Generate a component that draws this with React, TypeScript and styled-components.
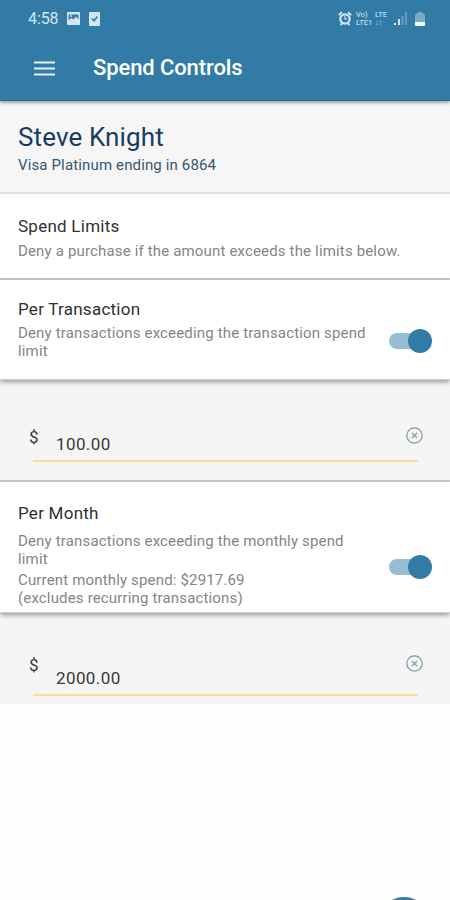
import React from "react";
import styled, { createGlobalStyle } from "styled-components";

const Global = createGlobalStyle`
  * { box-sizing: border-box; }
  body { margin: 0; background: #fff; font-family: Roboto, "Liberation Sans", sans-serif; }
`;

const Screen = styled.div`
  position: relative;
  width: 450px;
  height: 900px;
  overflow: hidden;
  background: #fefefe;
  display: flex;
  flex-direction: column;
`;

const Header = styled.header`
  flex: none;
  height: 101px;
  background: #337ba7;
  border-bottom: 1px solid #2e6d93;
  box-shadow: 0 1px 4px rgba(0, 0, 0, 0.5);
  z-index: 1;
`;

const StatusBar = styled.div`
  height: 37px;
  padding: 0 25px 0 28px;
  display: flex;
  align-items: center;
  justify-content: space-between;
  color: #d3e5f0;
`;

const StatusGroup = styled.div<{ $gap: number }>`
  display: flex;
  align-items: center;
  gap: ${(p) => p.$gap}px;
`;

const Clock = styled.span`
  font-size: 16px;
  line-height: 20px;
  letter-spacing: -0.1px;
  padding-top: 1px;
`;

const Network = styled.div`
  display: grid;
  grid-template-columns: 18px 15px;
  gap: 0 1px;
  font-size: 7.5px;
  line-height: 7.5px;
  font-weight: 500;
  white-space: nowrap;
  opacity: 0.85;
`;

const BatterySlot = styled.div`
  display: flex;
  margin-left: 4px;
`;

const TitleBar = styled.div`
  height: 63px;
  padding: 0 0 2px 34px;
  display: flex;
  align-items: center;
  gap: 38px;
`;

const Title = styled.h1`
  margin: 0;
  color: #fff;
  font-size: 22px;
  line-height: 26px;
  font-weight: 500;
  letter-spacing: -0.1px;
`;

const Account = styled.section`
  flex: none;
  height: 93px;
  padding: 21px 18px 0;
  background: #f6f6f6;
  border-bottom: 2px solid #dfdfdf;
`;

const Name = styled.div`
  color: #173c63;
  font-size: 26px;
  line-height: 30px;
  letter-spacing: 0.12px;
`;

const Card = styled.div`
  margin-top: 4px;
  color: #355770;
  font-size: 15px;
  line-height: 18px;
  letter-spacing: 0.14px;
`;

const Section = styled.section<{ $height: number; $top: number; $line?: boolean }>`
  flex: none;
  position: relative;
  height: ${(p) => p.$height}px;
  padding: ${(p) => p.$top}px 18px 0;
  background: #fff;
  border-bottom: ${(p) => (p.$line ? "2px solid #c9c9c9" : "1px solid #cfcfcf")};
  box-shadow: ${(p) => (p.$line ? "none" : "0 2px 5px rgba(0, 0, 0, 0.38)")};
  z-index: 1;
  display: flex;
  justify-content: space-between;
`;

const Heading = styled.h2<{ $gap: number }>`
  margin: 0 0 ${(p) => p.$gap}px;
  color: #303030;
  font-size: 17px;
  line-height: 20px;
  font-weight: 400;
  letter-spacing: 0.25px;
`;

const Text = styled.p`
  margin: 0 0 3px;
  color: #858585;
  font-size: 15px;
  line-height: 18px;
  letter-spacing: 0.16px;
  white-space: nowrap;
`;

const Toggle = styled.button<{ $top: number }>`
  flex: none;
  width: 43px;
  height: 24px;
  margin-top: ${(p) => p.$top}px;
  padding: 0;
  border: 0;
  background: none;
  display: flex;
  align-items: center;
  justify-content: flex-end;
`;

const Track = styled.span`
  width: 30px;
  height: 16px;
  margin-right: -11px;
  border-radius: 8px;
  background: #98bdd3;
`;

const Knob = styled.span`
  width: 24px;
  height: 24px;
  border-radius: 50%;
  background: #337ba7;
`;

const Field = styled.div<{ $height: number; $top: number; $line?: boolean }>`
  flex: none;
  height: ${(p) => p.$height}px;
  padding: ${(p) => p.$top}px 27px 0 29px;
  background: #f5f5f5;
  border-bottom: ${(p) => (p.$line ? "2px solid #cdcdcd" : "none")};
  display: grid;
  grid-template-columns: 27px 1fr 17px;
  align-items: start;
  align-content: start;
  color: #393939;
  font-size: 17px;
  line-height: 20px;
`;

const Amount = styled.span<{ $drop: number }>`
  padding-top: ${(p) => p.$drop}px;
  letter-spacing: 0.4px;
`;

const Underline = styled.div`
  grid-column: 1 / -1;
  height: 2px;
  margin: 6px 5px 0 4px;
  background: #f0e296;
`;

const ActionButton = styled.div`
  position: absolute;
  left: 376px;
  top: 897px;
  width: 56px;
  height: 56px;
  border-radius: 50%;
  background: #337ba7;
`;

const PhotoIcon = () => (
  <svg width="13" height="13" viewBox="0 0 13 13">
    <rect width="13" height="13" rx="1" fill="#d3e5f0" />
    <path d="M1.5 2.5h10v5L9 4.5 6.5 7.5 4.5 6l-3 2z" fill="#337ba7" />
    <circle cx="4" cy="4" r="1" fill="#d3e5f0" />
  </svg>
);

const TaskIcon = () => (
  <svg width="11" height="14" viewBox="0 0 11 14">
    <rect width="11" height="14" rx="1" fill="#d3e5f0" />
    <path d="M2.7 6.5L5 8.7 8.4 4.5" fill="none" stroke="#337ba7" strokeWidth="1.6" />
  </svg>
);

const AlarmIcon = () => (
  <svg width="14" height="15" viewBox="0 0 14 15" fill="none" stroke="#d3e5f0">
    <circle cx="7" cy="8" r="4.7" strokeWidth="2.2" />
    <path d="M7 5.3V8h2" strokeWidth="1.2" />
    <path d="M.8 4L4 1.2M13.2 4L10 1.2M2.5 14l1.5-1.5M11.5 14L10 12.5" strokeWidth="1.8" />
  </svg>
);

const SignalIcon = () => (
  <svg width="13" height="13" viewBox="0 0 13 13">
    <path d="M0 11h2v2H0zM4 7h2v6H4z" fill="#d3e5f0" />
    <path d="M7.5 4h2v9h-2zM11 0h2v13h-2z" fill="#d3e5f0" opacity=".32" />
  </svg>
);

const BatteryIcon = () => (
  <svg width="10" height="14" viewBox="0 0 10 14">
    <path d="M0 2.5L3 1V0h4v1l3 1.5V10H0z" fill="#d3e5f0" opacity=".45" />
    <path d="M0 10h10v3a1 1 0 01-1 1H1a1 1 0 01-1-1z" fill="#eef6fa" />
  </svg>
);

const MenuIcon = () => (
  <svg width="21" height="16" viewBox="0 0 21 16">
    <path d="M0 2.5h21M0 8.5h21M0 14.5h21" stroke="#e6f0f6" strokeWidth="2.2" />
  </svg>
);

const ClearIcon = () => (
  <svg width="17" height="17" viewBox="0 0 17 17" fill="none" stroke="#7d979f">
    <circle cx="8.5" cy="8.5" r="7.7" strokeWidth="1.2" />
    <path d="M5.9 5.9l5.2 5.2M11.1 5.9l-5.2 5.2" strokeWidth="1.3" />
  </svg>
);

const Switch = ({ top }: { top: number }) => (
  <Toggle $top={top} role="switch" aria-checked="true">
    <Track />
    <Knob />
  </Toggle>
);

export default function App() {
  return (
    <>
      <Global />
      <Screen>
        <Header>
          <StatusBar>
            <StatusGroup $gap={9}>
              <Clock>4:58</Clock>
              <PhotoIcon />
              <TaskIcon />
            </StatusGroup>
            <StatusGroup $gap={4}>
              <AlarmIcon />
              <Network>
                <span>Vo)</span>
                <span>LTE</span>
                <span>LTE1</span>
                <span>↓↑</span>
              </Network>
              <SignalIcon />
              <BatterySlot>
                <BatteryIcon />
              </BatterySlot>
            </StatusGroup>
          </StatusBar>
          <TitleBar>
            <MenuIcon />
            <Title>Spend Controls</Title>
          </TitleBar>
        </Header>

        <Account>
          <Name>Steve Knight</Name>
          <Card>Visa Platinum ending in 6864</Card>
        </Account>

        <Section $height={86} $top={22} $line>
          <div>
            <Heading $gap={6}>Spend Limits</Heading>
            <Text>Deny a purchase if the amount exceeds the limits below.</Text>
          </div>
        </Section>

        <Section $height={100} $top={19}>
          <div>
            <Heading $gap={5}>Per Transaction</Heading>
            <Text>
              Deny transactions exceeding the transaction spend
              <br />
              limit
            </Text>
          </div>
          <Switch top={30} />
        </Section>
        <Field $height={102} $top={47} $line>
          <span>$</span>
          <Amount $drop={7}>100.00</Amount>
          <ClearIcon />
          <Underline />
        </Field>

        <Section $height={131} $top={21}>
          <div>
            <Heading $gap={9}>Per Month</Heading>
            <Text>
              Deny transactions exceeding the monthly spend
              <br />
              limit
            </Text>
            <Text>
              Current monthly spend: $2917.69
              <br />
              (excludes recurring transactions)
            </Text>
          </div>
          <Switch top={52} />
        </Section>
        <Field $height={91} $top={42}>
          <span>$</span>
          <Amount $drop={13}>2000.00</Amount>
          <ClearIcon />
          <Underline />
        </Field>
        <ActionButton />
      </Screen>
    </>
  );
}
